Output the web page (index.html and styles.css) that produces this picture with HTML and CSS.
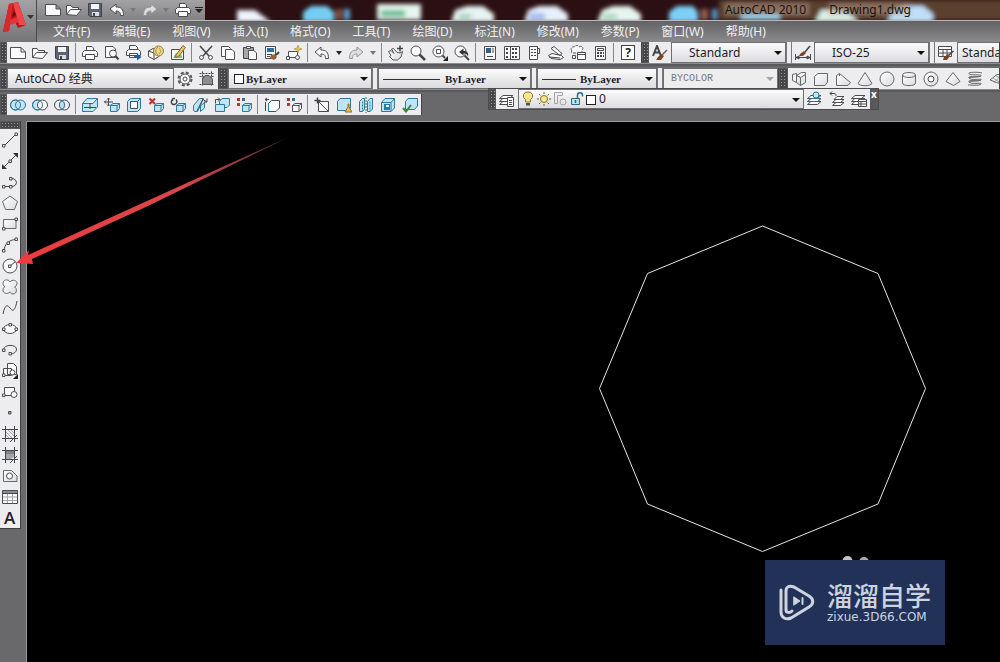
FILE: index.html
```html
<!DOCTYPE html>
<html lang="zh-CN">
<head>
<meta charset="utf-8">
<title>AutoCAD 2010 Drawing1.dwg</title>
<meta name="viewport" content="width=device-width, initial-scale=1">
<link rel="stylesheet" href="styles.css">
</head>
<body>
<svg class="defs" aria-hidden="true">
  <defs>
    <linearGradient id="shade" x1="0" y1="0" x2="1" y2="1"><stop offset="0" stop-color="#fff"/><stop offset="1" stop-color="#dadcde"/></linearGradient>
    <linearGradient id="tail" gradientUnits="userSpaceOnUse" x1="0" y1="0" x2="260" y2="0"><stop offset="0" stop-color="#ec3c3e"/><stop offset=".6" stop-color="#d8474b"/><stop offset="1" stop-color="#5a2a2c"/></linearGradient>
    <filter id="soft" x="-20%" y="-50%" width="140%" height="200%"><feGaussianBlur stdDeviation="2"/></filter>
  </defs>
  <symbol id="new" viewBox="0 0 16 16"><path class="w" d="M.5 2.500H11L15.500 7V13.500H.5ZM11 2.500V7H15.500"/></symbol>
  <symbol id="open" viewBox="0 0 16 16"><path class="w" d="M.5 12.500V3.500H5L6.500 5.500H12.500V7.500"/><path class="w" d="M.5 12.500 4.500 7.500H15.500L10.500 13.500Z"/></symbol>
  <symbol id="save" viewBox="0 0 16 16"><path d="M1.500 1.500H14.500V14.500H3L1.500 13Z" fill="#5d6470" stroke="#3d424c"/><path d="M4 2H12V7H4Z" fill="#f2f5f8"/><path d="M5 10H12V14H5Z" fill="#d9dee4"/><path d="M6 11H8V14H6Z" fill="#444"/></symbol>
  <symbol id="print" viewBox="0 0 16 16"><path class="w" d="M4.500 6V1.500H10L11.500 3V6"/><path class="w" d="M2.500 5.500H13.500L15.500 7.500V11.500H.5V7.500Z"/><path class="w" d="M3.500 9.500H12.500V14.500H3.500Z"/></symbol>
  <symbol id="undo" viewBox="0 0 16 16"><path class="w" d="M1 7 7 2V5C12 5 14.500 7 14.500 13.500H11.500C11.500 10 10 9 7 9V12Z"/></symbol>
  <symbol id="redo" viewBox="0 0 16 16"><path d="M15 7 9 2V5C4 5 1.500 7 1.500 13.500H4.500C4.500 10 6 9 9 9V12Z" fill="#dedee0" stroke="#919396"/></symbol>
  <symbol id="cube" viewBox="0 0 16 16"><path class="b" d="M6.500 8.500 9 6.500H15.500V11.500L13 14.500H6.500Z"/><path class="b" d="M6.500 8.500H13V14.500M13 8.500 15.500 6.500"/></symbol>
  <symbol id="box" viewBox="0 0 16 16"><path class="b" d="M1.500 5.500 5 1.500H14.500V11L11 14.500H1.500Z"/><path class="bl" d="M1.500 5.500H11V14.500M11 5.500 14.500 1.500"/></symbol>
  <symbol id="layers" viewBox="0 0 16 16"><path class="w" d="M.5 13.500 4 10.500H14L10.500 13.500ZM.5 10.500 4 7.500H14L10.500 10.500ZM.5 7.500 4 4.500H14L10.500 7.500Z"/></symbol>
</svg>

<header class="head">
  <button class="app" aria-label="应用程序菜单">
    <svg width="36" height="38" viewBox="0 0 36 38">
      <path d="M9 4 18 2 26 25 18 28 15 22 10 24 9 31 3 32Z" fill="#b3191d"/>
      <path d="M9 4 13 3 10 24 9 31 3 32Z" fill="#d9292c"/>
      <path d="M13 3 18 2 26 25 19 25Z" fill="#f0484a"/>
      <path d="M10 20 17 17 19 22 10 25Z" fill="#e83436"/>
      <path d="M12 17 14 11 16 15Z" fill="#70090c"/>
      <path d="M27 15H34L30.500 19Z" fill="#333"/>
    </svg>
  </button>
  <div class="title">
    <svg class="glow" width="100%" height="20" aria-hidden="true">
      <g filter="url(#soft)">
        <path d="M514 0H810V20H514Z" fill="#5b412f"/>
        <path d="M32 22V10H50L66 22Z" fill="#eef4fc"/>
        <path d="M98 22V12L106 6H122L129 12V22Z" fill="#74cdf2"/><path d="M131 9H137V20H131Z" fill="#8a5336"/><path d="M139 9H145V20H139Z" fill="#58a2cc"/>
        <path d="M172 4H216V20H172Z" fill="#e6f5f0"/><path d="M176 10H200V17H176Z" fill="#6ec09a"/>
        <path d="M246 22 250 10 262 6H278L289 14V22Z" fill="#e6f3f2"/><path d="M254 14H266V19H254Z" fill="#9ed1b6"/>
        <path d="M319 22 323 10 334 6H352L363 14V22Z" fill="#e6effb"/><path d="M324 13H340V20H324Z" fill="#a5bdee"/>
        <path d="M392 22 397 10 408 6H425L436 14V22Z" fill="#e6f5f0"/><path d="M398 14H412V19H398Z" fill="#a5d4bd"/>
        <path d="M464 22V12L472 6H488L493 12V22Z" fill="#7cd0f4"/><path d="M496 9H503V20H496Z" fill="#94614a"/><path d="M507 9H512V20H507Z" fill="#58a2cc"/>
        <path d="M536 14H575V20H536Z" fill="#9bd5ee"/>
        <path d="M610 22 616 10H640L654 22Z" fill="#d8efe4"/>
        <path d="M682 22 688 10 700 6H718L728 14V22Z" fill="#bfdff8"/>
        <path d="M520 3H604V15H520ZM624 3H706V15H624Z" fill="#b79c89" opacity=".5"/>
      </g>
    </svg>
    <div class="quick">
      <button class="q" aria-label="新建"><svg><use href="#new"/></svg></button>
      <button class="q" aria-label="打开"><svg><use href="#open"/></svg></button>
      <button class="q" aria-label="保存"><svg><use href="#save"/></svg></button>
      <button class="q" aria-label="放弃"><svg><use href="#undo"/></svg></button>
      <button class="drop faint" aria-label="放弃列表"></button>
      <button class="q" aria-label="重做"><svg><use href="#redo"/></svg></button>
      <button class="drop faint" aria-label="重做列表"></button>
      <button class="q" aria-label="打印"><svg><use href="#print"/></svg></button>
      <button class="drop capped" aria-label="自定义"></button>
    </div>
    <h1 class="name"><span>AutoCAD 2010</span><span>Drawing1.dwg</span></h1>
  </div>
  <nav class="menu">
    <button>文件(F)</button><button>编辑(E)</button><button>视图(V)</button><button>插入(I)</button><button>格式(O)</button><button>工具(T)</button><button>绘图(D)</button><button>标注(N)</button><button>修改(M)</button><button>参数(P)</button><button>窗口(W)</button><button>帮助(H)</button>
  </nav>
</header>

<section class="bars">
  <div class="row">
    <i class="grip"></i>
    <div class="tools std">
      <button class="t" aria-label="新建"><svg><use href="#new"/></svg></button>
      <button class="t" aria-label="打开"><svg><use href="#open"/></svg></button>
      <button class="t" aria-label="保存"><svg><use href="#save"/></svg></button>
      <i class="sep"></i>
      <button class="t" aria-label="打印"><svg><use href="#print"/></svg></button>
      <button class="t" aria-label="打印预览"><svg viewBox="0 0 16 16"><path class="w" d="M1.500 1.500H9L11.500 4V12.500H1.500Z"/><circle class="w" cx="9" cy="8.500" r="3.500"/><path d="M11.500 11 14.500 14.500" stroke="#444" stroke-width="2"/></svg></button>
      <button class="t" aria-label="发布"><svg viewBox="0 0 16 16"><path class="w" d="M3.500 5V.5H9.500L11.500 2.500V5M2.500 4.500H12.500L14.500 6.500V10.500H.5V6.500ZM3.500 8.500H11.500V12.500H3.500Z"/><path d="M8 11H11V8.500L15.500 12 11 15.500V13H8Z" fill="#1f5fa0"/></svg></button>
      <button class="t" aria-label="三维 DWF"><svg viewBox="0 0 16 16"><path class="w" d="M.5 6 5 3.500 11.500 5V11L6 14.500.5 11.500ZM.5 6 6 8V14.500"/><circle cx="10.500" cy="6" r="5" fill="#f0d680" stroke="#8d7a3c"/><path d="M10 2C7 4 7 8 10 10M11 3C13 5 13 7 11 9" stroke="#a8935a" fill="none"/></svg></button>
      <button class="t" aria-label="图形编辑"><svg viewBox="0 0 16 16"><path class="w" d="M1.500 4.500H13.500V14.500H1.500Z"/><path d="M3 13 6 8 9 11 11 9 12.500 13Z" fill="#7dbd7a"/><path d="M6 10 13 .5 15.500 2.500 8.500 11.500 5.500 12.500Z" fill="#f0c75a" stroke="#7b6434"/></svg></button>
      <i class="sep"></i>
      <button class="t" aria-label="剪切"><svg viewBox="0 0 16 16"><path class="l" stroke-width="1.500" d="M2 1 11 11M14 1 5 11"/><circle class="w" cx="3.500" cy="12.500" r="2"/><circle class="w" cx="12.500" cy="12.500" r="2"/></svg></button>
      <button class="t" aria-label="复制"><svg viewBox="0 0 16 16"><path class="w" d="M1.500 1.500H8.500L10.500 3.500V11.500H1.500Z"/><path class="w" d="M5.500 4.500H12L14.500 7V14.500H5.500Z"/></svg></button>
      <button class="t" aria-label="粘贴"><svg viewBox="0 0 16 16"><path d="M1.500 2.500H11.500V13.500H1.500Z" fill="#a5a7aa" stroke="#444"/><path class="w" d="M4.500 1.500H8.500V3.500H4.500ZM6.500 5.500H12L14.500 8V14.500H6.500Z"/></svg></button>
      <button class="t" aria-label="特性匹配"><svg viewBox="0 0 16 16"><path class="w" d="M1.500 1.500H11.500V13.500H1.500Z"/><path d="M3 3H10V7H3Z" fill="#326d9c"/><path class="l" d="M3 9.500H8M3 11.500H6"/><path d="M7 10 11 9 13 12 10 15 6 13Z" fill="#9a6036"/><path d="M12 10 15 7" stroke="#444" stroke-width="2"/></svg></button>
      <button class="t" aria-label="块编辑器"><svg viewBox="0 0 16 16"><path class="w" d="M2.500 6.500H11.500V12.500H2.500Z"/><circle class="w" cx="11.500" cy="12.500" r="2"/><path class="w" d="M.5 11.500H3.500V14.500H.5Z"/><path d="M12 0 13 3 16 4 13 5 12 8 11 5 8 4 11 3Z" fill="#e8c248" stroke="#a78b35" stroke-width=".6"/></svg></button>
      <i class="sep"></i>
      <button class="t" aria-label="放弃"><svg><use href="#undo"/></svg></button>
      <button class="drop" aria-label="放弃列表"></button>
      <button class="t" aria-label="重做"><svg><use href="#redo"/></svg></button>
      <button class="drop faint" aria-label="重做列表"></button>
      <i class="sep"></i>
      <button class="t" aria-label="平移"><svg viewBox="0 0 16 16"><path d="M.5 6.500 3 5.500 6 8.500 3.500 4 5.500 3.500 9 7.500 12 8 14.500 6.500 13 12 9.500 15H5L1.500 11.500 3 10.500Z" fill="url(#shade)" stroke="#555"/><path class="l" stroke-width="1.500" d="M9 3.500H15M12 .5V6.500"/></svg></button>
      <button class="t" aria-label="缩放"><svg viewBox="0 0 16 16"><circle class="w" cx="6" cy="6" r="5"/><path d="M9.500 9.500 15 15" stroke="#444" stroke-width="2.500"/></svg></button>
      <button class="t" aria-label="窗口缩放"><svg viewBox="0 0 16 16"><circle class="w" cx="6.500" cy="6.500" r="5.500"/><path class="w" d="M4.500 4.500H8.500V8.500H4.500Z"/><path d="M10.500 10.500 13 13" stroke="#444" stroke-width="2"/><path d="M16 11V16H11Z" fill="#222"/></svg></button>
      <button class="t" aria-label="上一个缩放"><svg viewBox="0 0 16 16"><circle class="w" cx="6.500" cy="6.500" r="5.500"/><path d="M10.500 10.500 15 15" stroke="#444" stroke-width="2"/><path d="M5 7 9.500 3.500V6C13 6 15 8 14 11.500 13 9 12 8.500 9.500 8.500V10.500Z" fill="#333"/></svg></button>
      <i class="sep"></i>
      <button class="t" aria-label="特性"><svg viewBox="0 0 16 16"><path class="w" d="M2.500 1.500H13.500V14.500H2.500Z"/><path d="M4 3H9V8H4Z" fill="#315f8a"/><path class="l" d="M11 3V8M5 11.500H11"/></svg></button>
      <button class="t" aria-label="设计中心"><svg viewBox="0 0 16 16"><path class="w" d="M.5 1.500H15.500V14.500H.5ZM6.500 1.500V14.500"/><path class="l" stroke-width="2" stroke-dasharray="2 1" d="M2 4H5M2 8H5M2 12H5M8 4H14M8 8H14M8 12H14"/></svg></button>
      <button class="t" aria-label="工具选项板"><svg viewBox="0 0 16 16"><path class="w" d="M3.500 1.500H11.500V14.500H3.500ZM11.500 3.500H13.500V8.500H11.500"/><path class="l" stroke-dasharray="2 1" d="M5 4.500H10M5 7.500H10M5 10.500H10"/></svg></button>
      <button class="t" aria-label="图纸集"><svg viewBox="0 0 16 16"><path class="w" d="M.5 10.500 4 8.500 13.500 10.500 15.500 12.500 12 14.500 3 13.500ZM3 3.500 6 1.500 14 8.500 12 10.500Z"/><path class="l" d="M1 12 12 13"/></svg></button>
      <button class="t" aria-label="标记集"><svg viewBox="0 0 16 16"><path class="w" stroke-dasharray="3 1" d="M2 6C0 4 2 1 4 2 6 0 8 0 9 2 12 0 14 3 12 5V8H3C1 8 1 7 2 6Z"/><path class="w" d="M7.500 7.500H15.500V14.500H7.500ZM7.500 9.500H15.500M2.500 10.500H5.500V13.500H2.500Z"/></svg></button>
      <button class="t" aria-label="计算器"><svg viewBox="0 0 16 16"><path class="w" d="M3.500 1.500H13.500V14.500H3.500ZM5.500 3.500H11.500V5.500H5.500Z"/><path class="l" stroke-width="2" stroke-dasharray="2 1" d="M5 8H12M5 11H12"/></svg></button>
      <i class="sep"></i>
      <button class="t help" aria-label="帮助"><b>?</b></button>
    </div>
    <i class="grip"></i>
    <div class="tools grow">
      <button class="t" aria-label="文字样式"><svg viewBox="0 0 16 16"><path class="l" stroke-width="2" d="M1 11 5 1 9 11M2.500 7.500H8"/><path d="M6 12 9 9 12 11 9 15 4 15Z" fill="#7b4426"/><path d="M10 10 15 5" stroke="#7b5a44" stroke-width="1.500"/></svg></button>
      <label class="combo w115"><select class="pad17" aria-label="文字样式"><option>Standard</option></select></label>
      <i class="split"></i>
      <button class="t" aria-label="标注样式"><svg viewBox="0 0 16 16"><path class="l" d="M.5 9V15M15.500 9V15M1 12.500H15M1 12.500 4 11V14ZM15 12.500 12 11V14Z"/><path d="M5 9 9 6 11 8 8 11 4 11Z" fill="#7b4426"/><path d="M10 7 15 1" stroke="#444" stroke-width="1.500"/></svg></button>
      <label class="combo w115"><select class="pad17" aria-label="标注样式"><option>ISO-25</option></select></label>
      <i class="split"></i>
      <button class="t" aria-label="表格样式"><svg viewBox="0 0 16 16"><path class="w" d="M.5 1.500H13.500V11.500H.5ZM.5 4.500H13.500M.5 8H13.500M5 4.500V11.500M9 4.500V11.500"/><path d="M6 12 10 9 12 11 9 15 5 15Z" fill="#7b4426"/><path d="M11 10 15.500 6" stroke="#444" stroke-width="1.500"/></svg></button>
      <label class="combo w115"><select class="pad4" aria-label="表格样式"><option>Standard</option></select></label>
    </div>
  </div>

  <div class="row">
    <i class="grip"></i>
    <div class="tools">
      <label class="combo w167"><select class="pad7" aria-label="工作空间"><option>AutoCAD 经典</option></select></label>
      <button class="t" aria-label="工作空间设置"><svg viewBox="0 0 16 16"><circle cx="8" cy="8" r="6.500" fill="none" stroke="#555" stroke-width="2" stroke-dasharray="3 2.100"/><circle class="w" cx="8" cy="8" r="5"/><circle class="w" cx="8" cy="8" r="2"/></svg></button>
      <button class="t" aria-label="我的工作空间"><svg viewBox="0 0 16 16"><path class="l" stroke-dasharray="2 1" d="M.5 2.500H15.500M.5 5.500H15.500M3.500 .5V15.500M12.500 .5V15.500M.5 13.500H15.500"/><path d="M3.500 8 6 4.500H10L13.500 8V13.500H3.500Z" fill="#8b8d90" stroke="#555"/></svg></button>
    </div>
    <i class="grip wide"></i>
    <div class="tools">
      <label class="combo serif w144"><i class="swatch"></i><select class="pad17" aria-label="颜色"><option>ByLayer</option></select></label>
      <i class="split"></i>
      <label class="combo serif w153"><i class="rule long"></i><select class="pad66" aria-label="线型"><option>ByLayer</option></select></label>
      <i class="split"></i>
      <label class="combo serif w120"><i class="rule"></i><select class="pad42" aria-label="线宽"><option>ByLayer</option></select></label>
      <i class="split"></i>
      <label class="combo mono off w115"><select class="pad7" aria-label="打印样式" disabled><option>BYCOLOR</option></select></label>
    </div>
    <i class="grip wide"></i>
    <div class="tools grow">
      <button class="t" aria-label="多段体"><svg viewBox="0 0 16 16"><path class="s" d="M5.500 4.500 10.500 1.500H14.500V11.500L9.500 14.500V6.500L5.500 4.500ZM9.500 6.500 14.500 3.500"/><path class="s" d="M1.500 3.500 5.500 2.500V11.500L1.500 9.500ZM5.500 4.500 9.500 6.500V14.500L5.500 11.500Z"/></svg></button>
      <button class="t" aria-label="长方体"><svg viewBox="0 0 16 16"><path class="s" d="M1.500 5.500 5 2.500H14.500V11L12 14.500H1.500Z"/></svg></button>
      <button class="t" aria-label="楔体"><svg viewBox="0 0 16 16"><path class="s" d="M1.500 14.500V4.500L4.500 2.500 15.500 11.500 13 14.500ZM4.500 2.500V5"/></svg></button>
      <button class="t" aria-label="圆锥体"><svg viewBox="0 0 16 16"><path class="s" d="M8 1.500 15 12.500C13 15.500 3 15.500 1 12.500Z"/></svg></button>
      <button class="t" aria-label="球体"><svg viewBox="0 0 16 16"><circle class="s" cx="8" cy="8" r="7"/></svg></button>
      <button class="t" aria-label="圆柱体"><svg viewBox="0 0 16 16"><path class="s" d="M1.500 4V12C1.500 15.500 14.500 15.500 14.500 12V4"/><ellipse class="s" cx="8" cy="4" rx="6.500" ry="2.500"/></svg></button>
      <button class="t" aria-label="圆环体"><svg viewBox="0 0 16 16"><circle class="s" cx="8" cy="8" r="7"/><circle class="w" cx="8" cy="8" r="3"/></svg></button>
      <button class="t" aria-label="棱锥体"><svg viewBox="0 0 16 16"><path class="s" d="M8 1.500 15 10.500 8.500 14.500 1 10.500Z"/></svg></button>
      <button class="t" aria-label="螺旋"><svg viewBox="0 0 16 16"><path class="s" d="M2 2C0 5 16 3 14 5 12 7 0 4 2 7S16 7 14 9 0 8 2 11 16 11 14 13M15 2C12 1 4 1 2 2M14 5C12 6 4 6 2 7M14 9C12 10 4 10 2 11M14 13C12 15 4 14 1 14"/></svg></button>
      <button class="t" aria-label="平面曲面"><svg viewBox="0 0 16 16"><path class="s" d="M1 9 8 3.500H16V12H9Z"/><path class="g" d="M4 7 12 12M7 5 16 9M5 12 12 4"/></svg></button>
    </div>
  </div>

  <div class="row">
    <i class="grip"></i>
    <div class="tools">
      <button class="t" aria-label="并集"><svg viewBox="0 0 16 16"><circle class="b" cx="5.500" cy="8" r="5"/><circle class="b" cx="10.500" cy="8" r="5"/><circle class="bl" cx="5.500" cy="8" r="5"/></svg></button>
      <button class="t" aria-label="差集"><svg viewBox="0 0 16 16"><circle class="b" cx="5.500" cy="8" r="5"/><circle class="w" cx="10.500" cy="8" r="5"/><circle class="bl" cx="5.500" cy="8" r="5"/></svg></button>
      <button class="t" aria-label="交集"><svg viewBox="0 0 16 16"><circle class="l" cx="5.500" cy="8" r="5"/><circle class="l" cx="10.500" cy="8" r="5"/><path class="b" d="M8 3.700A5 5 0 0 1 8 12.300 5 5 0 0 1 8 3.700Z"/></svg></button>
      <i class="sep"></i>
      <button class="t" aria-label="拉伸面"><svg viewBox="0 0 16 16"><path class="b" d="M.5 6.500 5 1.500H15.500V10L11 14.500H.5ZM.5 6.500H11L15.500 1.500"/><path class="l" d="M2 10.500H14M8 6V12"/></svg></button>
      <button class="t" aria-label="移动面"><svg viewBox="0 0 16 16"><use href="#cube"/><path class="l" d="M.5 5H9M4.500 1V9M3 2.500 4.500 1 6 2.500M3 7.500 4.500 9 6 7.500M2 3.500.5 5 2 6.500"/></svg></button>
      <button class="t" aria-label="偏移面"><svg viewBox="0 0 16 16"><path class="b" d="M1.500 4.500 4.500 1.500H14.500V11.500L11.500 14.500H1.500Z"/><path class="w" d="M4.500 4.500H11.500V11.500H4.500Z"/><path class="bl" d="M11.500 4.500 14.500 1.500"/></svg></button>
      <button class="t" aria-label="删除面"><svg viewBox="0 0 16 16"><use href="#cube"/><path d="M1.500 1.500 7 7M7 1.500 1.500 7" stroke="#b8352c" stroke-width="2"/></svg></button>
      <button class="t" aria-label="旋转面"><svg viewBox="0 0 16 16"><use href="#cube"/><path class="l" stroke-width="1.500" d="M2.500 1.500H5M2.500 1.500V4M2.500 2.500C0 5 2 8 4.500 7.500 7 7 7.500 4 6 2.500"/></svg></button>
      <button class="t" aria-label="倾斜面"><svg viewBox="0 0 16 16"><path class="b" d="M1.500 13.500V8.500L7.500 1.500H11.500L5.500 14.500H3Z"/><path class="b" d="M8.500 14.500V9L12.500 5.500V11Z"/><path class="l" d="M5 14 11 2M11 2.500 15 5M15 1.500V5H12"/></svg></button>
      <button class="t" aria-label="复制面"><svg viewBox="0 0 16 16"><path class="b" d="M5.500 4.500 8 1.500H15.500V8L13 10.500H5.500Z"/><path class="b" d="M1.500 7.500H10.500V14.500H1.500Z"/><path class="l" d="M1.500 6.500V2.500H6M4 .5 6 2.500 4 4.500"/></svg></button>
      <button class="t" aria-label="着色面"><svg viewBox="0 0 16 16"><use href="#cube"/><path d="M1 1H4V4H1ZM1 6H4V9H1Z" fill="#a03d34"/><path d="M6 1H9V4H6Z" fill="#3f6c97"/></svg></button>
      <i class="sep"></i>
      <button class="t" aria-label="复制边"><svg viewBox="0 0 16 16"><path class="w" d="M4.500 6.500 7.500 3.500H15.500V11L12 14.500H4.500Z"/><path d="M4.500 6.500V14.500" stroke="#2c80a8"/><path class="l" d="M1.500 14V5M1 2.500H5M1 2.500 3 1M1 2.500 3 4"/></svg></button>
      <button class="t" aria-label="着色边"><svg viewBox="0 0 16 16"><path class="w" d="M6.500 8.500 9 6.500H15.500V11.500L13 14.500H6.500ZM6.500 8.500H13V14.500M13 8.500 15.500 6.500"/><path d="M1 1H4V4H1ZM1 6H4V9H1Z" fill="#a03d34"/><path d="M6 1H9V4H6Z" fill="#3f6c97"/></svg></button>
      <i class="sep"></i>
      <button class="t" aria-label="压印"><svg viewBox="0 0 16 16"><path class="w" d="M4.500 4.500H14.500V14.500H4.500ZM4.500 4.500 14.500 14.500"/><path class="l" stroke-width="1.500" d="M.5 3.500H6.500M3.500 .5V6.500"/></svg></button>
      <button class="t" aria-label="清除"><svg viewBox="0 0 16 16"><path class="b" d="M1.500 4.500 4 1.500H14.500V11L12 13.500H1.500Z"/><path d="M12 7V10L9 15H16L13 10V7Z" fill="#ecc15a" stroke="#8d6f2b"/></svg></button>
      <button class="t" aria-label="分割"><svg viewBox="0 0 16 16"><path class="b" d="M1.500 4.500 4.500 1.500H6.500V12L4.500 14.500H1.500ZM9.500 4.500 12 1.500H14.500V12L12 14.500H9.500Z"/><path class="bl" stroke-dasharray="2 1" d="M8 0V16M4.500 4.500V14.500M12 4.500V14.500"/></svg></button>
      <button class="t" aria-label="抽壳"><svg viewBox="0 0 16 16"><use href="#box"/><path d="M4 7H10V13H4Z" fill="#2b7da6"/><path d="M6 8H9V10H6Z" fill="#e5f6fd"/></svg></button>
      <button class="t" aria-label="检查"><svg viewBox="0 0 16 16"><path class="b" d="M3.500 4.500 6 1.500H15.500V9L12.500 12.500H3.500Z"/><path d="M1 11 4 14.500 9 8" fill="none" stroke="#2f8c35" stroke-width="2"/></svg></button>
    </div>
  </div>

  <div class="float">
    <i class="grip"></i>
    <div class="tools grow">
      <button class="t" aria-label="图层特性"><svg viewBox="0 0 16 16"><use href="#layers"/><path class="w" d="M8.500 6.500H14.500V15.500H8.500ZM10 9.500H13M10 11.500H13M10 13.500H13"/></svg></button>
      <label class="combo fill layer">
        <span class="states">
          <svg viewBox="0 0 16 16"><path d="M8 1A4 4 0 0 0 5.500 8.500V11H10.500V8.500A4 4 0 0 0 8 1Z" fill="#fbe58c" stroke="#87743a"/><path d="M6 12H10V14.500H6Z" fill="#555"/></svg>
          <svg viewBox="0 0 16 16"><circle cx="8" cy="8" r="3.500" fill="#ffe58a" stroke="#87743a"/><path d="M8 1V3M8 13V15M1 8H3M13 8H15M3 3 4.500 4.500M13 3 11.500 4.500M3 13 4.500 11.500M13 13 11.500 11.500" stroke="#756334"/></svg>
          <svg viewBox="0 0 16 16"><path class="g" d="M2.500 1.500H10.500V4.500H5.500V12.500H2.500Z"/><circle class="g" cx="11" cy="11" r="3"/></svg>
          <svg viewBox="0 0 16 16"><path d="M3.500 7.500H11.500V13.500H3.500Z" fill="#b9e2f3" stroke="#256b90"/><path d="M9.500 7V4C9.500 1 14.500 1 14.500 4V5.500M7.500 9V12" fill="none" stroke="#256b90" stroke-width="1.500"/></svg>
        </span>
        <i class="swatch"></i><select class="pad80" aria-label="图层"><option>0</option></select>
      </label>
      <button class="t" aria-label="置为当前"><svg viewBox="0 0 16 16"><use href="#layers"/><path class="bl" d="M.5 10.500 4 7.500H14L10.500 10.500Z"/><circle class="b" cx="9" cy="4" r="3"/></svg></button>
      <button class="t" aria-label="上一个图层"><svg viewBox="0 0 16 16"><path class="w" d="M3.500 14.500 7 11.500H15L11.500 14.500ZM3.500 11.500 7 8.500H15L11.500 11.500ZM5 8.500 8 5.500H15L11.500 8.500Z"/><path class="l" d="M1 2.500H5C7 2.500 7 4 7 5M3 .5 1 2.500 3 4.500"/></svg></button>
      <button class="t" aria-label="图层状态"><svg viewBox="0 0 16 16"><use href="#layers"/><path class="w" d="M7.500 8.500H15.500V15.500H7.500ZM7.500 10.500H15.500M10 10.500V15.500M7.500 13H15.500"/></svg></button>
    </div>
    <button class="close" aria-label="关闭">x</button>
  </div>
</section>

<main class="work">
  <aside class="draw">
    <i class="grip flat"></i>
    <button class="d" aria-label="直线"><svg viewBox="0 0 16 16"><path class="l" d="M2 14 14 2"/><path class="w" d="M.5 12.500H3V15H.5ZM13 1H15.500V3.500H13Z"/></svg></button>
    <button class="d" aria-label="构造线"><svg viewBox="0 0 16 16"><path class="l" d="M1 15 15 1"/><path d="M0 16V11L5 16ZM16 0V5L11 0Z" fill="#333"/><path class="w" d="M7 7H9.500V9.500H7Z"/></svg></button>
    <button class="d" aria-label="多段线"><svg viewBox="0 0 16 16"><path class="l" d="M1.500 12.500H9.500C16 12.500 16 4.500 9.500 4.500"/><path class="w" d="M.5 11.500H3V14H.5ZM7.500 11.500H10V14H7.500ZM7.500 3.500H10V6H7.500Z"/></svg></button>
    <button class="d" aria-label="正多边形"><svg viewBox="0 0 16 16"><path class="s" d="M8 1 15.500 6.500 12.500 14.500H3.500L.5 6.500Z"/></svg></button>
    <button class="d" aria-label="矩形"><svg viewBox="0 0 16 16"><path class="s" d="M1.500 3.500H14V12.500H1.500Z"/><path class="w" d="M.5 11.500H3V14H.5ZM13 2H15.500V4.500H13Z"/></svg></button>
    <button class="d" aria-label="圆弧"><svg viewBox="0 0 16 16"><path class="l" d="M2 14C2 8 7 2.500 14 2.500"/><path class="w" d="M.5 12.500H3V15H.5ZM5 5H7.500V7.500H5ZM13 1H15.500V3.500H13Z"/></svg></button>
    <button class="d" aria-label="圆"><svg viewBox="0 0 16 16"><circle class="w" cx="8" cy="8" r="7"/><path class="l" d="M8 8 13 4"/><path class="w" d="M6.500 7H9V9.500H6.500Z"/></svg></button>
    <button class="d" aria-label="修订云线"><svg viewBox="0 0 16 16"><path class="s" d="M8 3C10 0 15.500 1 15 5 14.500 7 13.500 7.500 12.500 8 15.500 9 15 15 11 15 9 15 8.500 14 8 13 5 16 .5 14 1 11 1 9 2 8 3 8-1 5 2 0 5 1 7 1 7.500 2 8 3Z"/></svg></button>
    <button class="d" aria-label="样条曲线"><svg viewBox="0 0 16 16"><path class="l" d="M1 14C3 5 5 4 8 8S13 11 15 1"/></svg></button>
    <button class="d" aria-label="椭圆"><svg viewBox="0 0 16 16"><ellipse class="w" cx="8" cy="8" rx="6.500" ry="4.500"/><path class="w" d="M.5 7H3V9.500H.5ZM13 7H15.500V9.500H13ZM7 2.500H9.500V5H7Z"/></svg></button>
    <button class="d" aria-label="椭圆弧"><svg viewBox="0 0 16 16"><path class="l" d="M1.500 8C2 2 14 2 14.500 7 14.500 10 12 12 8 12"/><path class="w" d="M.5 7H3V9.500H.5ZM7 10.500H9.500V13H7Z"/></svg></button>
    <button class="d" aria-label="插入块"><svg viewBox="0 0 16 16"><path class="w" d="M5.500 .5H11.500L14.500 3.500V11.500H5.500ZM1.500 5.500H9.500V12.500H1.500Z"/><circle class="w" cx="10.500" cy="9.500" r="2.500"/><path class="w" d="M.5 11H3V13.500H.5Z"/><path d="M16 11V16H11Z" fill="#222"/></svg></button>
    <button class="d" aria-label="创建块"><svg viewBox="0 0 16 16"><path class="w" d="M2.500 3.500H12.500V11.500H2.500Z"/><circle class="w" cx="12" cy="10.500" r="3"/><path class="w" d="M.5 10H3V12.500H.5Z"/></svg></button>
    <button class="d" aria-label="点"><svg viewBox="0 0 16 16"><path d="M6.500 6.500H9V9H6.500Z" fill="#999" stroke="#555"/></svg></button>
    <button class="d" aria-label="图案填充"><svg viewBox="0 0 16 16"><path class="l" d="M3.500 0V16M12.500 0V16M0 3.500H16M0 12.500H16M8 16 15 9"/><path class="g" d="M4 6 10 12M6 4 12 10M4 9 7 12M9 4 12 7"/></svg></button>
    <button class="d" aria-label="渐变色"><svg viewBox="0 0 16 16"><path d="M4 4H12V10L9 12H4Z" fill="#a3a5a8"/><path d="M4 4H12V7H4Z" fill="#808286"/><path class="l" d="M3.500 0V16M12.500 0V16M0 3.500H16M0 12.500H16M8 16 15 9"/></svg></button>
    <button class="d" aria-label="面域"><svg viewBox="0 0 16 16"><path class="s" d="M1.500 2.500H9.500L15 8V13.500H1.500Z"/><circle class="w" cx="7.500" cy="8" r="3"/></svg></button>
    <button class="d" aria-label="表格"><svg viewBox="0 0 16 16"><path class="w" d="M.5 1.500H15.500V14.500H.5Z"/><path d="M1 2H15V4H1Z" fill="#8a8c90"/><path class="l" d="M.5 4.500H15.500"/><path class="g" d="M1 8H15M1 11.500H15M5.500 5V14M10.500 5V14"/></svg></button>
    <button class="d letter" aria-label="多行文字">A</button>
  </aside>
  <section class="canvas">
    <svg class="model" width="100%" height="100%">
      <path d="M735.500 104 851 151.500 898.500 266.500 851 382 735.500 429.500 620.500 382 572.500 266.500 620.500 151.500Z" fill="none" stroke="#e6e6e6"/>
      <path d="M-11 141 2 128 1 133 120 79 262 15 121 84 5 137 6 142Z" fill="url(#tail)"/>
      <circle cx="820.500" cy="439" r="5" fill="#c4c4c4"/><circle cx="837" cy="440" r="5" fill="#aaa"/>
    </svg>
    <div class="mark">
      <svg width="36" height="38" viewBox="0 0 36 38" fill="none" stroke="#cdd3df" stroke-linecap="round" stroke-linejoin="round">
        <path d="M2 6V28C2 34 7 36 12 34L30 23C35 20 35 15 30 12L15 3C10 1 7 3 7 7V26C7 29 11 29 13 27" stroke-width="3"/>
        <path d="M15 13 21 17 15 21Z" fill="#cdd3df" stroke-width="1"/><path d="M23.500 14V20" stroke-width="2"/>
      </svg>
      <p class="brand"><strong>溜溜自学</strong><span>zixue.3D66.COM</span></p>
    </div>
  </section>
</main>
</body>
</html>
```
FILE: styles.css
```css
* { box-sizing: border-box; }
body {
  margin: 0;
  height: 100vh;
  display: flex;
  flex-direction: column;
  overflow: hidden;
  background: #69696c;
  color: #222;
  font: 12px/16px "Noto Sans", "Noto Sans CJK SC", sans-serif;
}
button, select {
  margin: 0;
  padding: 0;
  border: 0;
  border-radius: 0;
  background: none;
  color: inherit;
  font: inherit;
}
.defs { position: absolute; width: 0; height: 0; }
.w { fill: #fafafb; stroke: #4c4d50; }
.l { fill: none; stroke: #444548; }
.g { fill: none; stroke: #a2a4a8; }
.s { fill: url(#shade); stroke: #66686b; }
.b { fill: #bde5f4; stroke: #2f7699; }
.bl { fill: none; stroke: #2f7699; }

/* Title and menus */
.head {
  display: grid;
  grid-template-columns: 37px 1fr;
  grid-template-rows: 20px 22px;
}
.app {
  grid-row: 1 / 3;
  display: flex;
  border-right: 1px solid #4a4a4c;
  background: linear-gradient(#a4a4a6, #747476);
}
.title {
  position: relative;
  display: flex;
  justify-content: space-between;
  background: #2b1013;
  overflow: hidden;
}
.glow { position: absolute; left: 168px; top: 0; }
.quick {
  position: relative;
  display: flex;
  padding-left: 5px;
  width: 168px;
  background: linear-gradient(#a3a3a5, #828284);
}
.q { width: 22px; display: grid; place-items: center; }
.q svg, .t svg, .d svg { width: 16px; height: 16px; display: block; }
.name {
  position: relative;
  display: flex;
  gap: 23px;
  margin: 0;
  padding-right: 89px;
  font-size: 12px;
  font-weight: 400;
  line-height: 19px;
  color: #181210;
}
.menu {
  display: flex;
  align-items: center;
  gap: 22px;
  padding-left: 16px;
  border-top: 1px solid #b9b9bb;
  background: linear-gradient(#626264, #8b8b8d);
  color: #f0f0f0;
  white-space: nowrap;
}

/* Toolbars */
.bars {
  position: relative;
  display: flex;
  flex-direction: column;
  gap: 5px;
  padding-bottom: 6px;
}
.row { display: flex; height: 21px; box-shadow: 0 1px #8c8c8e, 0 3px #59595c; }
.row:nth-of-type(3) { box-shadow: none; }
.grip {
  flex: none;
  width: 7px;
  background: radial-gradient(circle, #98989a 1px, #464649 1px) 0 0 / 3px 3px;
  border: 1px solid #58585b;
}
.grip.wide { width: 9px; }
.grip.flat { width: 100%; height: 8px; }
.tools {
  display: flex;
  flex: none;
  background: #ededef;
  border-right: 1px solid #444;
}
.tools.std { padding-right: 2px; }
.tools.grow { flex: 1 1 0; min-width: 0; overflow: hidden; }
.t { flex: none; width: 22px; display: grid; place-items: center; }
.sep { width: 6px; border-right: 1px solid #85858a; margin: 1px 3px 1px -3px; }
.split { flex: none; width: 6px; background: #ededef; border: solid #77777a; border-width: 0 1px; }
.drop { width: 12px; display: grid; place-items: center; }
.drop::after { content: ""; border: solid transparent; border-width: 4px 3px 0; border-top-color: #222; }
.drop.faint::after { border-top-color: #77777a; }
.drop.capped::before { content: ""; width: 8px; height: 1px; background: #222; }
.drop.capped { align-content: center; gap: 1px; }
.drop.capped::after { border-width: 4px 4px 0; }
.help b { width: 14px; line-height: 13px; border: 1px solid #444; background: #fff; text-align: center; }

.combo {
  position: relative;
  flex: none;
  display: flex;
  align-items: center;
  height: 21px;
  border: 1px solid #6f6f73;
  background: linear-gradient(#fbfbfb, #dcdcdf);
}
.combo::after {
  content: "";
  position: absolute;
  right: 3px;
  top: 8px;
  border: solid transparent;
  border-width: 4px 4px 0;
  border-top-color: #111;
  pointer-events: none;
}
.combo select { appearance: none; width: 100%; height: 19px; color: #1c1c1e; opacity: 1; }
.combo.fill { flex: 1 1 0; min-width: 0; }
.w115 { width: 115px; }
.w120 { width: 120px; }
.w144 { width: 144px; }
.w153 { width: 153px; }
.w167 { width: 167px; }
.pad4 { padding-left: 4px; }
.pad7 { padding-left: 7px; }
.pad17 { padding-left: 17px; }
.pad42 { padding-left: 42px; }
.pad66 { padding-left: 66px; }
.pad80 { padding-left: 80px; }
.serif { font: bold 11px "Liberation Serif", serif; }
.mono { font: 10px "Liberation Mono", monospace; }
.combo.off { background: #ededee; }
.combo.off select { color: #77777a; }
.off::after { border-top-color: #a4a4a7; }
.swatch { position: absolute; left: 5px; top: 5px; width: 10px; height: 10px; border: 1px solid #222; background: #fff; }
.rule { position: absolute; left: 4px; top: 10px; width: 34px; border-top: 1px solid #333; }
.rule.long { width: 57px; }

.float {
  position: absolute;
  left: 488px;
  top: 46px;
  width: 391px;
  height: 22px;
  display: flex;
  border: 1px solid #4c4c4f;
  background: #59595c;
}
.float .tools { border: 0; }
.float .combo { height: 20px; }
.layer .swatch { left: 67px; }
.states { position: absolute; left: 1px; top: 1px; display: flex; }
.states svg { width: 16px; height: 16px; }
.close { width: 8px; color: #fff; font-weight: 700; font-size: 10px; line-height: 10px; align-self: flex-start; }

/* Drawing area */
.work { flex: 1; display: flex; min-height: 0; }
.draw {
  width: 21px;
  flex: none;
  align-self: flex-start;
  background: #ededef;
  border: solid #3f3f42;
  border-width: 0 1px 1px 0;
}
.draw .grip { display: block; }
.d { width: 19px; height: 21px; display: grid; place-items: center; }
.letter { font: 600 17px/21px "Open Sans", sans-serif; }
.canvas {
  position: relative;
  flex: 1;
  margin-left: 5px;
  border: solid #9b9b9d;
  border-width: 1px 0 0 1px;
  background: #000;
}
.model { position: absolute; left: 0; top: 0; overflow: visible; }
.mark {
  position: absolute;
  right: 55px;
  bottom: 17px;
  width: 180px;
  height: 85px;
  display: flex;
  align-items: center;
  gap: 12px;
  padding-left: 14px;
  background: #223157;
  color: #cdd3df;
}
.brand { margin: 0; display: flex; flex-direction: column; gap: 3px; }
.brand strong { font: 500 26px/26px "Noto Sans CJK SC", sans-serif; }
.brand span { font: 12px/12px "DejaVu Sans", sans-serif; }
```
